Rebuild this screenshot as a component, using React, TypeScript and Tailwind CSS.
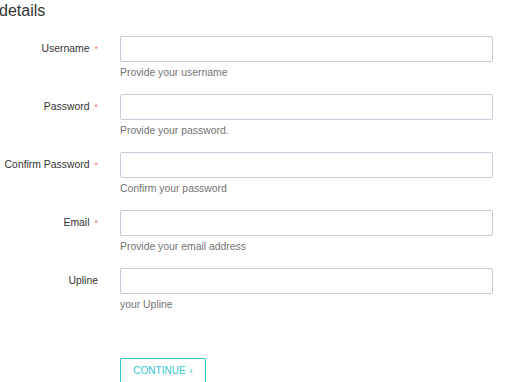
const fields = [
  { label: 'Username', required: true, help: 'Provide your username', type: 'text' },
  { label: 'Password', required: true, help: 'Provide your password.', type: 'password' },
  { label: 'Confirm Password', required: true, help: 'Confirm your password', type: 'password' },
  { label: 'Email', required: true, help: 'Provide your email address', type: 'email' },
  { label: 'Upline', required: false, help: 'your Upline', type: 'text' },
];

export default function App() {
  return (
    <div className="w-[516px] h-[382px] overflow-hidden bg-white font-['Liberation_Sans',Arial,sans-serif] text-[#333]">
      {/* Section title (cut off on the left) */}
      <h3 className="-ml-[1px] text-[16px] leading-[20px] pt-[1px] text-[#333]">details</h3>

      <form className="mt-[15px] pr-[23px]" onSubmit={(e) => e.preventDefault()}>
        {fields.map((f) => (
          <div key={f.label} className="flex mb-[14px]">
            <label className="w-[100px] shrink-0 flex justify-end whitespace-nowrap text-[10.4px] leading-[26px] pr-[2px]">
              {f.label}
              {f.required && <span className="text-[#e8777f] ml-[5px] text-[9px]">*</span>}
            </label>
            <div className="flex-1 ml-[20px]">
              <input
                type={f.type}
                className="block w-full h-[26px] border border-[#c2cad8] rounded-[2px] px-2 text-[11px] outline-none"
              />
              <div className="mt-[3px] text-[10.4px] leading-[15px] text-[#737373]">{f.help}</div>
            </div>
          </div>
        ))}

        <div className="pl-[120px] pt-[31px]">
          <button
            type="submit"
            className="w-[86px] pt-[5px] pb-[10px] leading-[14px] border border-[#32c5d2] text-[#32c5d2] text-[10px] rounded-[1px] bg-white"
          >
            CONTINUE <span className="ml-[1px]">›</span>
          </button>
        </div>
      </form>
    </div>
  );
}
